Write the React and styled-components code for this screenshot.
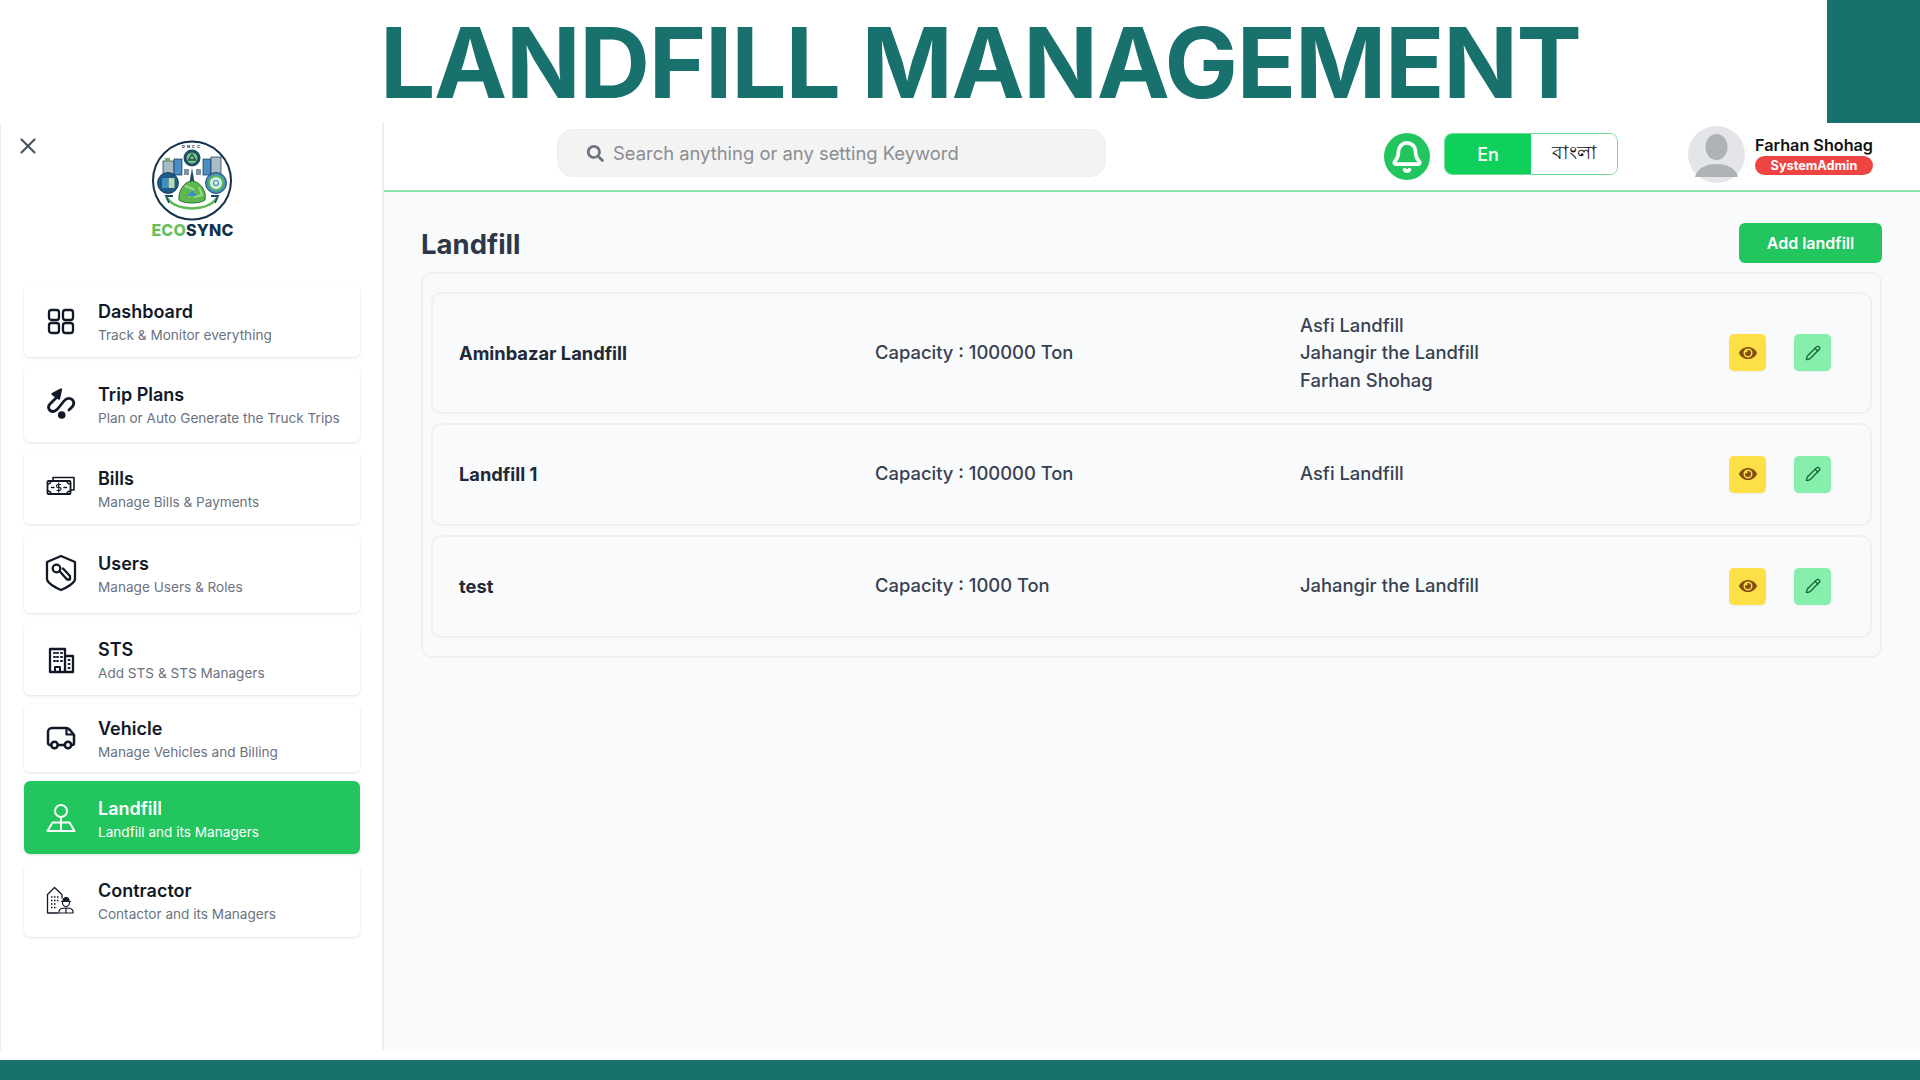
import React from 'react';
import styled, { createGlobalStyle } from 'styled-components';
import { X, Bell, Pencil } from 'lucide-react';
import { FaSearch, FaEye } from 'react-icons/fa';

const GlobalStyle = createGlobalStyle`
    html, body { margin: 0; padding: 0; background: #fff; }
    body { font-family: Inter, "Noto Sans", sans-serif; color: #111827; }
    * { box-sizing: border-box; }
`;

const Page = styled.div`
    width: 1920px;
    height: 1080px;
    display: flex;
    flex-direction: column;
    overflow: hidden;
    position: relative;
`;
const Banner = styled.header`
    height: 123px;
    display: grid;
    grid-template-columns: 380px 1fr 93px;
    align-items: center;
`;
const BannerTitle = styled.h1`
    grid-column: 2;
    margin: 0;
    padding-top: 2px;
    font-size: 98px;
    line-height: 121px;
    font-weight: 700;
    letter-spacing: -1.3px;
    color: #18716d;
    white-space: nowrap;
`;
const Corner = styled.div`
    grid-column: 3;
    height: 123px;
    background: #18716d;
`;
const Body = styled.div`
    height: 928px;
    display: flex;
`;
const Footer = styled.div`
    height: 20px;
    margin-top: 9px;
    background: #18716d;
`;
const Sidebar = styled.aside`
    width: 384px;
    flex: none;
    background: #fff;
    border-left: 1px solid #e9ebef;
    border-right: 2px solid #eceef1;
    position: relative;
`;
const Close = styled.button`
    position: absolute;
    top: 10px;
    left: 14px;
    padding: 0;
    border: 0;
    background: none;
    color: #4b5563;
    display: flex;
`;
const Brand = styled.div`
    height: 161px;
    padding-top: 17px;
    display: flex;
    flex-direction: column;
    align-items: center;
`;
const BrandName = styled.div`
    margin-left: 2px;
    font-size: 16px;
    line-height: 18px;
    font-weight: 800;
    letter-spacing: 0.2px;
    color: #12304a;
    span { color: #66c05a; }
`;
const Nav = styled.nav`
    display: flex;
    flex-direction: column;
    gap: 9px;
    padding: 0 22px 0 23px;
`;
const NavItem = styled.a`
    height: ${p => p.$h}px;
    display: flex;
    align-items: center;
    gap: 22px;
    padding-left: 22px;
    border-radius: 6px;
    background: ${p => (p.$active ? '#22c55e' : '#fff')};
    color: ${p => (p.$active ? '#fff' : '#111827')};
    box-shadow: 0 1px 3px rgba(0, 0, 0, 0.12);
`;
const NavIcon = styled.svg`
    width: 30px;
    height: 30px;
    flex: none;
    overflow: visible;
    fill: none;
    stroke: currentColor;
    stroke-width: 2.3;
    stroke-linecap: round;
    stroke-linejoin: round;
`;
const NavText = styled.div`
    display: flex;
    flex-direction: column;
    gap: 1px;
    padding-top: 3px;
`;
const NavTitle = styled.div`
    font-size: 18px;
    line-height: 24px;
    font-weight: 600;
`;
const NavSub = styled.div`
    font-size: 13.6px;
    line-height: 20px;
    color: ${p => (p.$active ? '#fff' : '#6b7280')};
`;
const Main = styled.main`
    flex: 1;
    min-width: 0;
    display: flex;
    flex-direction: column;
    background: #f9fafb;
`;
const TopBar = styled.div`
    height: 69px;
    flex: none;
    display: flex;
    align-items: center;
    padding: 0 47px 7px 173px;
    background: #fff;
    border-bottom: 2px solid #86e2a8;
`;
const Search = styled.div`
    width: 549px;
    height: 48px;
    display: flex;
    align-items: center;
    gap: 9px;
    padding-left: 29px;
    background: #f3f3f3;
    border: 1px solid #eeeeee;
    border-radius: 16px;
    color: #6b7280;
    font-size: 18.4px;
    svg { flex: none; }
`;
const SearchText = styled.span`
    color: #8a8d92;
`;
const TopRight = styled.div`
    margin-left: auto;
    margin-top: 2px;
    display: flex;
    align-items: center;
`;
const BellBadge = styled.div`
    width: 46px;
    height: 47px;
    margin-top: 5px;
    border-radius: 50%;
    background: #22c55e;
    color: #fff;
    display: flex;
    align-items: center;
    justify-content: center;
`;
const Toggle = styled.div`
    width: 174px;
    height: 42px;
    margin: 0 70px 0 14px;
    display: flex;
    border: 1px solid #6fdc97;
    border-radius: 8px;
    overflow: hidden;
    background: #fff;
`;
const Lang = styled.div`
    flex: 1;
    display: flex;
    align-items: center;
    justify-content: center;
    font-size: ${p => (p.$active ? 18 : 19)}px;
    font-weight: ${p => (p.$active ? 500 : 400)};
    background: ${p => (p.$active ? '#0fd05b' : '#fff')};
    color: ${p => (p.$active ? '#fff' : '#111')};
`;
const User = styled.div`
    display: flex;
    flex-direction: column;
    margin-left: 10px;
`;
const UserName = styled.div`
    font-size: 16.2px;
    line-height: 22px;
    font-weight: 600;
    color: #111;
    white-space: nowrap;
`;
const RoleBadge = styled.div`
    height: 19px;
    border-radius: 10px;
    background: #ef4444;
    color: #fff;
    font-size: 12.7px;
    line-height: 19px;
    font-weight: 700;
    text-align: center;
`;
const Content = styled.div`
    padding: 31px 38px 0 37px;
`;
const ContentHead = styled.div`
    display: flex;
    align-items: center;
    justify-content: space-between;
    height: 40px;
    margin-bottom: 9px;
`;
const Heading = styled.h2`
    margin: 2px 0 0;
    font-size: 27.5px;
    line-height: 40px;
    font-weight: 700;
    color: #2d3748;
`;
const AddButton = styled.button`
    width: 143px;
    height: 40px;
    border: 0;
    border-radius: 6px;
    background: #22c55e;
    color: #fff;
    font-family: inherit;
    font-size: 16px;
    font-weight: 600;
`;
const Panel = styled.section`
    width: 1461px;
    display: flex;
    flex-direction: column;
    gap: 9px;
    padding: 18px 8px;
    border: 2px solid #eff0f2;
    border-radius: 10px;
`;
const Row = styled.article`
    min-height: 103px;
    display: grid;
    grid-template-columns: 416px 425px 1fr auto;
    align-items: center;
    padding: 17.5px 39px 17.5px 26px;
    border: 2px solid #eff0f2;
    border-radius: 10px;
`;
const RowName = styled.div`
    font-size: 18.3px;
    font-weight: 700;
    color: #1f2937;
`;
const RowCell = styled.div`
    font-size: 18.4px;
    line-height: 27.5px;
    font-weight: 500;
    color: #374151;
`;
const Actions = styled.div`
    display: flex;
    gap: 28px;
`;
const IconButton = styled.button`
    width: 37px;
    height: 37px;
    padding: 0;
    border: 0;
    border-radius: 5px;
    display: flex;
    align-items: center;
    justify-content: center;
    background: ${p => (p.$tone === 'view' ? '#fde047' : '#86efac')};
    color: ${p => (p.$tone === 'view' ? '#854d0e' : '#166534')};
    box-shadow: 0 1px 2px rgba(0, 0, 0, 0.06);
`;

const icons = {
    dashboard: (
        <>
            <rect x="3" y="4" width="10" height="10" rx="2.5" />
            <rect x="17" y="4" width="10" height="10" rx="2.5" />
            <rect x="3" y="17" width="10" height="10" rx="2.5" />
            <rect x="17" y="17" width="10" height="10" rx="2.5" />
        </>
    ),
    trip: (
        <>
            <path d="M11 8L4 15C1 18 3 22.500 7 22.500C9 22.500 10 21.500 12 19.500L18 12C20 9.500 22 9 24 9.500C28 10.500 29 15 26 18L23 21" strokeWidth="2.800" />
            <path d="M15 0.500L6.500 5L13 9.500z" fill="currentColor" />
            <circle cx="15.700" cy="26" r="3.800" fill="currentColor" stroke="none" />
        </>
    ),
    bills: (
        <>
            <path d="M7 7V4.500h21V17H25" strokeWidth="1.600" />
            <rect x="1.500" y="8" width="23" height="13" rx="1" strokeWidth="1.800" />
            <path d="M5.500 14.500h2.500M18 14.500h2.500M1.500 11c2 0 3.500-1 3.500-3M24.500 11c-2 0-3.500-1-3.500-3M1.500 18c2 0 3.500 1 3.500 3M24.500 18c-2 0-3.500 1-3.500 3" strokeWidth="1.400" />
            <path d="M14.500 11.500h-2.500a1.500 1.500 0 000 3h1.500a1.500 1.500 0 010 3H11M12.700 10v9" strokeWidth="1.200" />
        </>
    ),
    users: (
        <>
            <path d="M15 -2L29 4V21C29 25 20 30 15 32C10 30 1 25 1 21V4Z" />
            <circle cx="10.500" cy="10.500" r="3.800" />
            <path d="M13.500 13l7.500 8.500h3V18l-7-7.500" />
        </>
    ),
    sts: (
        <>
            <path d="M4 28V5h15v23zM19 12h8v16H4" />
            <path d="M8 9h1M11 9h1M15 9h1M8 13h1M11 13h1M15 13h1M8 17h1M11 17h1M15 17h1M22.500 16h1M22.500 20h1M22.500 24h1M9 28v-5h5v5" strokeWidth="2" />
        </>
    ),
    vehicle: (
        <>
            <path d="M5 22H3.500A2 2 0 012 20V9a4 4 0 014-4h14c2 0 3 1 4 2l4 5v8a2 2 0 01-2 2h-1M12 22h7" strokeWidth="2.500" />
            <path d="M20.500 6.500v5h7" strokeWidth="2.200" />
            <circle cx="8.500" cy="22" r="3.200" strokeWidth="2.500" />
            <circle cx="22" cy="22" r="3.200" strokeWidth="2.500" />
        </>
    ),
    landfill: (
        <>
            <circle cx="15" cy="8" r="6" strokeWidth="2" />
            <path d="M15 14v14M1.500 28L6.500 19.500h17L28.500 28z" strokeWidth="2" />
        </>
    ),
    contractor: (
        <>
            <path d="M12 28H1.500V9.500L8.500 2.500 16 9.500V13" strokeWidth="1.300" />
            <path d="M5 12h1.500M8 12h1.500M11 12h1.500M5 15.500h1.500M8 15.500h1.500M11 15.500h1.500M5 19h1.500M8 19h1.500M5 22.500h1.500M8 22.500h1.500" strokeWidth="1.300" strokeLinecap="butt" />
            <path d="M16.500 17.500a3.500 4 0 007 0" strokeWidth="1.200" />
            <path d="M15.500 16.500h9M17 15.500a3 3 0 016 0z" strokeWidth="1.200" fill="currentColor" />
            <path d="M13 28v-1.500c0-2.500 3-3.500 7-3.500s7 1 7 3.500V28zM20 23v5" strokeWidth="1.200" />
        </>
    ),
};

const navItems = [
    { key: 'dashboard', title: 'Dashboard', sub: 'Track & Monitor everything', h: 73 },
    { key: 'trip', title: 'Trip Plans', sub: 'Plan or Auto Generate the Truck Trips', h: 76 },
    { key: 'bills', title: 'Bills', sub: 'Manage Bills & Payments', h: 73 },
    { key: 'users', title: 'Users', sub: 'Manage Users & Roles', h: 80 },
    { key: 'sts', title: 'STS', sub: 'Add STS & STS Managers', h: 73 },
    { key: 'vehicle', title: 'Vehicle', sub: 'Manage Vehicles and Billing', h: 68 },
    { key: 'landfill', title: 'Landfill', sub: 'Landfill and its Managers', h: 73, active: true },
    { key: 'contractor', title: 'Contractor', sub: 'Contactor and its Managers', h: 74 },
];

const landfills = [
    { name: 'Aminbazar Landfill', capacity: 'Capacity : 100000 Ton', managers: ['Asfi Landfill', 'Jahangir the Landfill', 'Farhan Shohag'] },
    { name: 'Landfill 1', capacity: 'Capacity : 100000 Ton', managers: ['Asfi Landfill'] },
    { name: 'test', capacity: 'Capacity : 1000 Ton', managers: ['Jahangir the Landfill'] },
];

// rough hand drawn copy of the EcoSync badge
const Logo = () => (
    <svg width="82" height="81" viewBox="0 0 82 81">
        <circle cx="41" cy="40.500" r="39" fill="#fff" stroke="#12304a" strokeWidth="2" />
        <text x="41" y="8" fontSize="4" fontWeight="700" textAnchor="middle" letterSpacing="2" fill="#12304a" fontFamily="Inter, sans-serif">DNCC</text>
        <rect x="12" y="21" width="11" height="14" fill="#a9bcc6" stroke="#12304a" strokeWidth="0.700" />
        <rect x="14" y="18" width="5" height="4" fill="#6fb06a" />
        <rect x="23" y="19" width="8" height="16" fill="#4a8fc4" stroke="#12304a" strokeWidth="0.700" />
        <rect x="33" y="29" width="5" height="6" fill="#7d939f" />
        <rect x="45" y="29" width="5" height="6" fill="#7d939f" />
        <rect x="52" y="19" width="8" height="16" fill="#4a8fc4" stroke="#12304a" strokeWidth="0.700" />
        <rect x="60" y="17" width="10" height="18" fill="#a9bcc6" stroke="#12304a" strokeWidth="0.700" />
        <circle cx="41" cy="18" r="8.500" fill="#1d4d68" />
        <circle cx="41" cy="18" r="5.500" fill="#7cc576" />
        <path d="M41 14l3.500 6h-7z" fill="none" stroke="#1d4d68" strokeWidth="1.300" />
        <circle cx="17" cy="43" r="10.500" fill="#1d5a85" stroke="#12304a" strokeWidth="0.800" />
        <rect x="11" y="38" width="6" height="10" fill="#3f8fc4" />
        <rect x="17.500" y="38" width="6" height="10" fill="#b9d9b0" />
        <circle cx="65" cy="43" r="10.500" fill="#3f8fc4" stroke="#12304a" strokeWidth="0.800" />
        <circle cx="65" cy="43" r="7" fill="#d8f0e0" stroke="#5cb85c" strokeWidth="2" />
        <circle cx="65" cy="43" r="2.500" fill="none" stroke="#3f8fc4" strokeWidth="1.200" />
        <path d="M41 28l2.500 14h-5z" fill="#1d4d68" />
        <path d="M28 60c-1-10 6-19 13-19s15 9 13 19c-5 4-21 4-26 0z" fill="#5cb84f" stroke="#2f6f3a" strokeWidth="1" />
        <path d="M34 46l8 3-4 8M48 47l3 8-8 2" fill="none" stroke="#9ad98a" strokeWidth="2" />
        <path d="M36 56l5-6 5 6z" fill="#3f8fc4" />
        <path d="M16 58c10 14 40 14 50 0" fill="none" stroke="#5cb84f" strokeWidth="2.500" />
        <path d="M22 56l-7 0 3 7M60 56l7 0-3 7" fill="none" stroke="#1d4d68" strokeWidth="1.800" />
    </svg>
);

const Avatar = () => (
    <svg width="57" height="57" viewBox="0 0 57 57">
        <ellipse cx="28.500" cy="28.500" rx="28.500" ry="28.500" fill="#e3e5e8" />
        <ellipse cx="28.500" cy="21" rx="11" ry="13" fill="#aeb2b6" />
        <path d="M7 51c2-9 11-13 21.500-13S48 42 50 51z" fill="#aeb2b6" />
    </svg>
);

const App = () => {
    return (
        <Page>
            <GlobalStyle />
            <Banner>
                <BannerTitle>LANDFILL MANAGEMENT</BannerTitle>
                <Corner />
            </Banner>
            <Body>
                <Sidebar>
                    <Close><X size={26} strokeWidth={2} /></Close>
                    <Brand>
                        <Logo />
                        <BrandName><span>ECO</span>SYNC</BrandName>
                    </Brand>
                    <Nav>
                        {navItems.map(item => (
                            <NavItem key={item.key} $h={item.h} $active={item.active}>
                                <NavIcon viewBox="0 0 30 30">{icons[item.key]}</NavIcon>
                                <NavText>
                                    <NavTitle>{item.title}</NavTitle>
                                    <NavSub $active={item.active}>{item.sub}</NavSub>
                                </NavText>
                            </NavItem>
                        ))}
                    </Nav>
                </Sidebar>
                <Main>
                    <TopBar>
                        <Search>
                            <FaSearch size={17} />
                            <SearchText>Search anything or any setting Keyword</SearchText>
                        </Search>
                        <TopRight>
                            <BellBadge><Bell size={34} strokeWidth={2.6} /></BellBadge>
                            <Toggle>
                                <Lang $active>En</Lang>
                                <Lang>বাংলা</Lang>
                            </Toggle>
                            <Avatar />
                            <User>
                                <UserName>Farhan Shohag</UserName>
                                <RoleBadge>SystemAdmin</RoleBadge>
                            </User>
                        </TopRight>
                    </TopBar>
                    <Content>
                        <ContentHead>
                            <Heading>Landfill</Heading>
                            <AddButton>Add landfill</AddButton>
                        </ContentHead>
                        <Panel>
                            {landfills.map(row => (
                                <Row key={row.name}>
                                    <RowName>{row.name}</RowName>
                                    <RowCell>{row.capacity}</RowCell>
                                    <RowCell>
                                        {row.managers.map(m => <div key={m}>{m}</div>)}
                                    </RowCell>
                                    <Actions>
                                        <IconButton $tone="view"><FaEye size={18} /></IconButton>
                                        <IconButton $tone="edit"><Pencil size={16} /></IconButton>
                                    </Actions>
                                </Row>
                            ))}
                        </Panel>
                    </Content>
                </Main>
            </Body>
            <Footer />
        </Page>
    );
};

export default App;
